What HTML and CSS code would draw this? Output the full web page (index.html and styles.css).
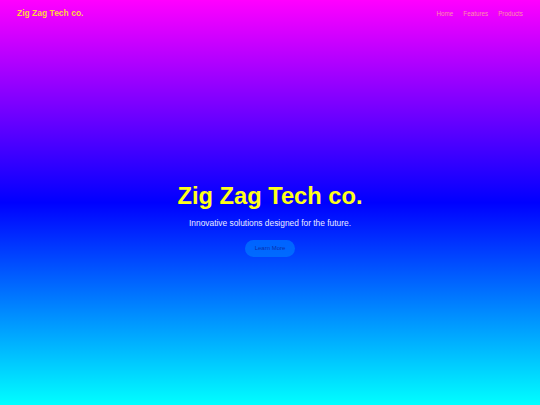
FILE: index.html
```html
<!DOCTYPE html>
<html lang="en">
<head>
<meta charset="utf-8">
<title>Zig Zag Tech co.</title>
<link rel="stylesheet" href="styles.css">
</head>
<body>
<div class="page">
  <header class="topbar">
    <div class="logo">Zig Zag Tech co.</div>
    <nav class="nav">
      <a href="#">Home</a>
      <a href="#">Features</a>
      <a href="#">Products</a>
    </nav>
  </header>
  <main class="hero">
    <h1 class="title">Zig Zag Tech co.</h1>
    <p class="subtitle">Innovative solutions designed for the future.</p>
    <a class="cta" href="#">Learn More</a>
  </main>
</div>
</body>
</html>
```
FILE: styles.css
```css
html, body {
  margin: 0;
  padding: 0;
  height: 100%;
}
body {
  font-family: "Liberation Sans", Arial, sans-serif;
  background: linear-gradient(to bottom, #ff00ff 0%, #0000ff 50%, #00ffff 100%);
}
.page {
  height: 405px;
  display: flex;
  flex-direction: column;
}
.topbar {
  display: flex;
  justify-content: space-between;
  align-items: center;
  padding: 7px 17px 0 17px;
  height: 12px;
}
.logo {
  color: #ffd23f;
  font-weight: bold;
  font-size: 8.5px;
}
.nav {
  display: flex;
  gap: 10px;
}
.nav a {
  color: #ff8fa8;
  text-decoration: none;
  font-size: 6.3px;
  font-family: "Liberation Sans", Arial, sans-serif;
}
.hero {
  flex: 1;
  display: flex;
  flex-direction: column;
  align-items: center;
  padding-top: 163px;
}
.title {
  margin: 0;
  color: #ffff1a;
  font-size: 23.7px;
  font-weight: bold;
  line-height: 28px;
}
.subtitle {
  margin: 8px 0 0 0;
  color: #e8ecff;
  font-size: 8.4px;
  line-height: 11px;
}
.cta {
  margin-top: 11px;
  background: rgba(0, 128, 255, 0.65);
  color: #0a2fb0;
  text-decoration: none;
  font-family: "Liberation Sans", Arial, sans-serif;
  font-size: 6px;
  padding: 5px 10px;
  line-height: 7px;
  border-radius: 10px;
}
```
